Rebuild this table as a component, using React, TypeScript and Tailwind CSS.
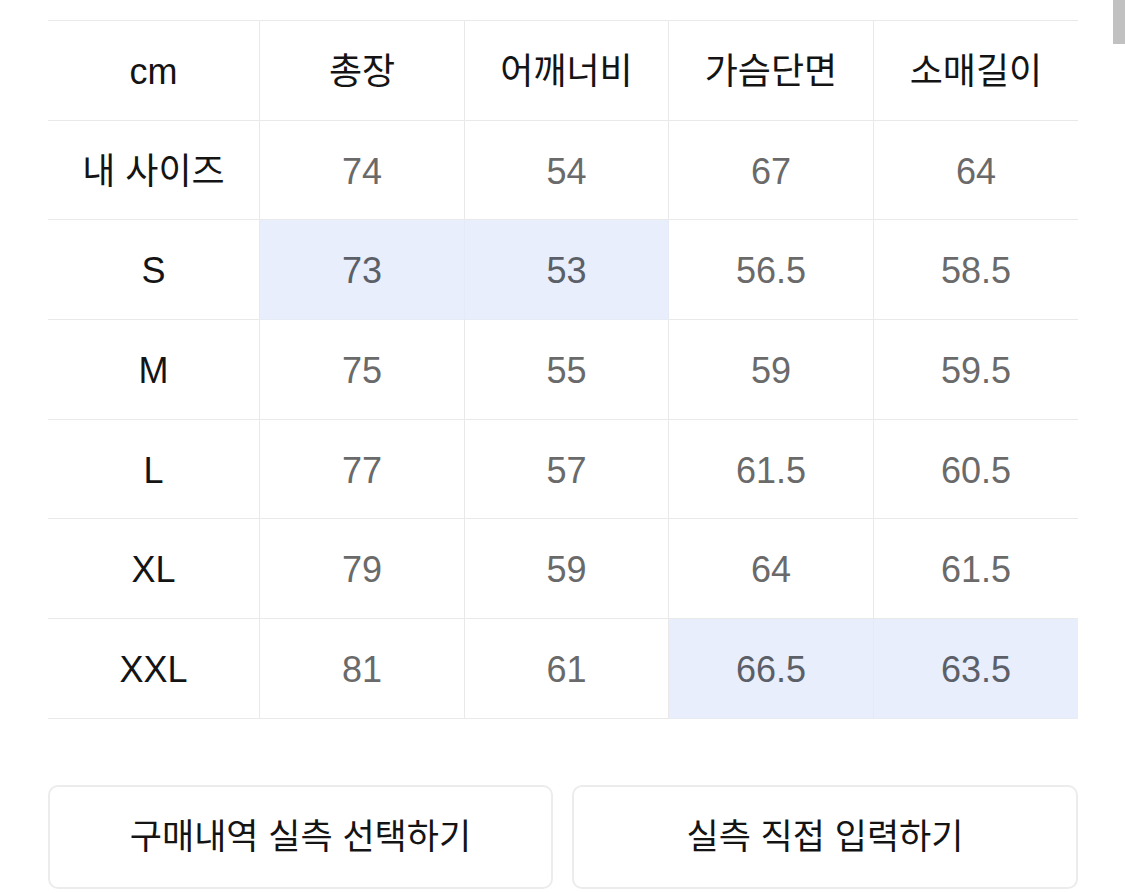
import React from 'react';

type Cell = { v: string; hl?: boolean };

const headers = ['cm', '총장', '어깨너비', '가슴단면', '소매길이'];

const rows: { label: string; cells: Cell[] }[] = [
  { label: '내 사이즈', cells: [{ v: '74' }, { v: '54' }, { v: '67' }, { v: '64' }] },
  { label: 'S', cells: [{ v: '73', hl: true }, { v: '53', hl: true }, { v: '56.5' }, { v: '58.5' }] },
  { label: 'M', cells: [{ v: '75' }, { v: '55' }, { v: '59' }, { v: '59.5' }] },
  { label: 'L', cells: [{ v: '77' }, { v: '57' }, { v: '61.5' }, { v: '60.5' }] },
  { label: 'XL', cells: [{ v: '79' }, { v: '59' }, { v: '64' }, { v: '61.5' }] },
  { label: 'XXL', cells: [{ v: '81' }, { v: '61' }, { v: '66.5', hl: true }, { v: '63.5', hl: true }] },
];

const font = { fontFamily: '"Liberation Sans", "Noto Sans CJK KR", sans-serif' };

export default function App() {
  return (
    <div className="relative w-[1125px] h-[893px] bg-white overflow-hidden" style={font}>
      {/* scrollbar thumb */}
      <div className="absolute right-0 top-0 w-[12px] h-[44px] bg-[#c1c1c1]" />

      <div className="pl-[48px] pt-[20px]">
        <div className="w-[1030px] border-t border-[#e9e9e9] grid grid-cols-[212px_205px_204px_205px_204px]">
          {headers.map((h, i) => (
            <div
              key={h}
              className={`h-[99.7px] pt-[3px] flex items-center justify-center border-b border-[#e9e9e9] text-[36px] text-[#141414] ${i < 4 ? 'border-r' : ''}`}
            >
              {h}
            </div>
          ))}
          {rows.map((r) => (
            <React.Fragment key={r.label}>
              <div className="h-[99.7px] pt-[3px] flex items-center justify-center border-b border-r border-[#e9e9e9] text-[36px] text-[#141414]">
                {r.label}
              </div>
              {r.cells.map((c, j) => (
                <div
                  key={j}
                  className={`h-[99.7px] pt-[3px] flex items-center justify-center border-b border-[#e9e9e9] text-[36px] ${j < 3 ? 'border-r' : ''} ${c.hl ? 'bg-[#e8eefc] border-b-[#e6ebf6] border-r-[#e4eaf8] text-[#5b5f68]' : 'text-[#6a6a6a]'}`}
                >
                  {c.v}
                </div>
              ))}
            </React.Fragment>
          ))}
        </div>

        <div className="w-[1030px] mt-[66px] flex gap-[19px]">
          <button className="w-[505px] h-[104px] rounded-[10px] border-2 border-[#ececec] bg-white text-[35px] text-[#141414] flex items-center justify-center">
            구매내역 실측 선택하기
          </button>
          <button className="w-[506px] h-[104px] rounded-[10px] border-2 border-[#ececec] bg-white text-[35px] text-[#141414] flex items-center justify-center">
            실측 직접 입력하기
          </button>
        </div>
      </div>
    </div>
  );
}
